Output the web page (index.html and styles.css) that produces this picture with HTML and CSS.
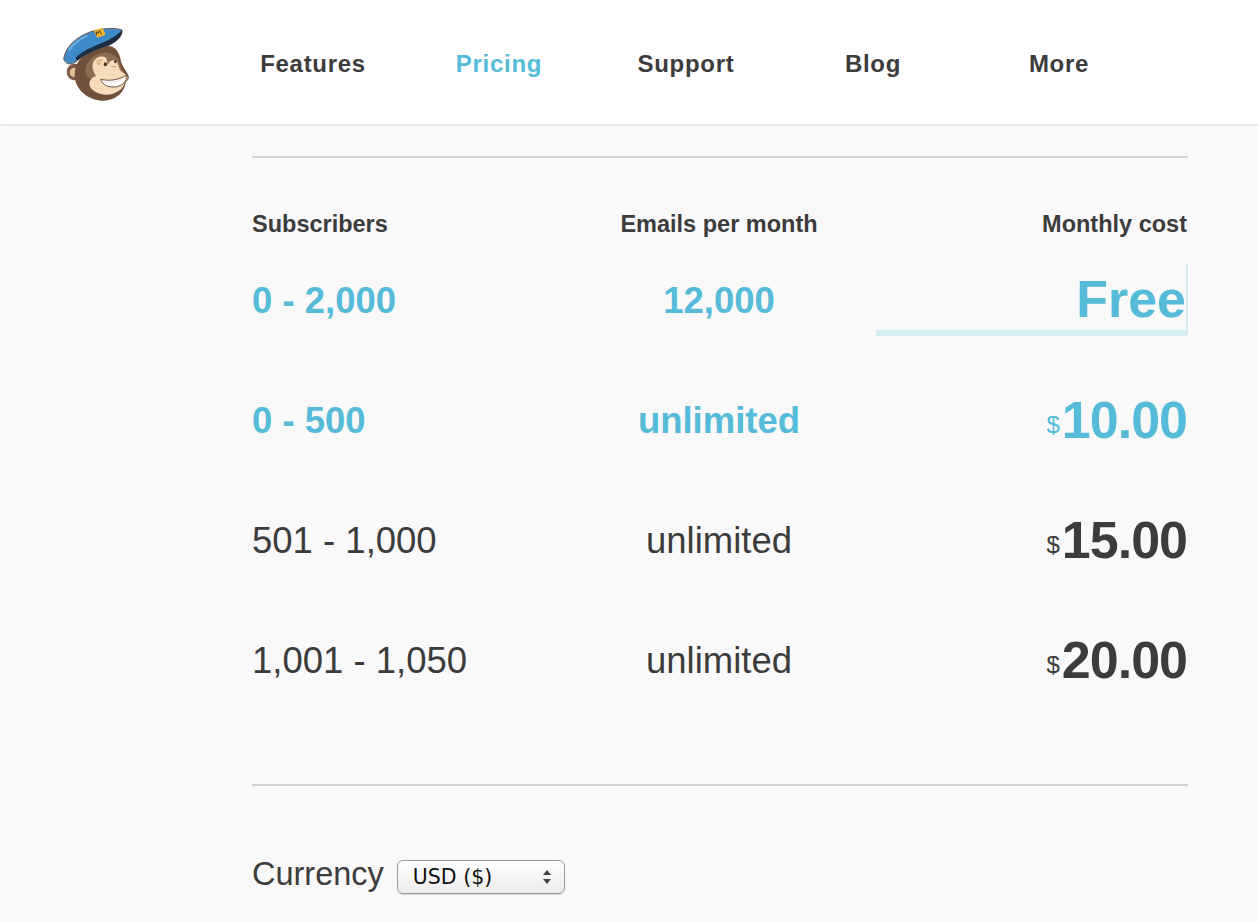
FILE: index.html
```html
<!DOCTYPE html>
<html lang="en">
<head>
<meta charset="utf-8">
<title>Pricing</title>
<link rel="stylesheet" href="styles.css">
</head>
<body>
<header class="top">
  <a class="logo" href="#" aria-label="Logo">
    <svg width="110" height="110" viewBox="0 0 330 330">
      <circle cx="105" cy="186" r="25" fill="#7a5a44"/>
      <circle cx="103" cy="187" r="14" fill="#e2bd95"/>
      <path d="M108 170C120 135 165 112 205 108C232 110 240 135 243 155C248 172 262 185 266 198C268 206 264 212 258 216C252 250 225 272 190 272C150 272 115 245 106 212C103 195 104 182 108 170z" fill="#70503a"/>
      <path d="M136 186C134 160 160 130 190 128C206 126 222 132 234 146C240 165 246 180 256 194L200 214L160 210C146 206 138 198 136 186z" fill="#8e6c51"/>
      <path d="M160 156C168 140 186 136 196 142C202 148 202 156 202 166C208 154 216 148 226 152C234 156 236 170 240 180C246 188 258 192 262 200C264 208 258 214 254 216C252 238 226 254 200 254C172 254 150 240 148 222C148 210 156 202 168 198C160 184 154 170 160 156z" fill="#f6dcb8"/>
      <path d="M168 152C176 146 186 146 190 150C184 154 182 164 178 168C172 164 166 158 168 152z" fill="#e3bd94"/>
      <path d="M72 142C78 108 112 80 150 66C185 54 225 52 246 60C248 75 235 92 210 104C175 118 140 128 112 152C100 162 85 166 78 157C72 152 70 147 72 142z" fill="#3f8ac9" stroke="#6f5a4e" stroke-width="3"/>
      <path d="M86 122C98 102 118 88 142 76" fill="none" stroke="#6db0e0" stroke-width="6"/>
      <path d="M246 60C248 75 235 92 210 104C175 118 140 128 112 152L106 144C130 118 170 106 200 92C222 82 238 70 246 60z" fill="#1e2f45"/>
      <path d="M162 62l24-9 8 14 2 8-24 8-8-14z" fill="#f0b52f"/>
      <path d="M170 76l-2-11 7 5 3-9 7 12" fill="none" stroke="#54400f" stroke-width="3"/>
      <ellipse cx="196" cy="163" rx="5" ry="6" fill="#4a3527"/>
      <ellipse cx="226" cy="155" rx="3.5" ry="5" fill="#4a3527"/>
      <path d="M214 168c4 3 10 3 14 1" fill="none" stroke="#b98e66" stroke-width="3"/>
      <path d="M182 208C208 214 236 210 258 196C262 212 250 226 230 230C208 234 188 226 182 208z" fill="#fff" stroke="#70503a" stroke-width="3"/>
      <path d="M192 216C212 219 236 214 252 204" fill="none" stroke="#d9c9b4" stroke-width="2"/>
    </svg>
  </a>
  <nav class="nav">
    <a href="#">Features</a>
    <a href="#" class="active">Pricing</a>
    <a href="#">Support</a>
    <a href="#">Blog</a>
    <a href="#">More</a>
  </nav>
</header>
<main class="content">
  <hr class="rule rule-top">
  <div class="row heads">
    <div>Subscribers</div>
    <div class="mid">Emails per month</div>
    <div class="end">Monthly cost</div>
  </div>
  <div class="row data hl first">
    <div class="lab">0 - 2,000</div>
    <div class="lab mid">12,000</div>
    <div class="end"><span class="free">Free</span></div>
  </div>
  <div class="row data hl">
    <div class="lab">0 - 500</div>
    <div class="lab mid">unlimited</div>
    <div class="end"><span class="cur">$</span><span class="amt">10.00</span></div>
  </div>
  <div class="row data">
    <div class="lab">501 - 1,000</div>
    <div class="lab mid">unlimited</div>
    <div class="end"><span class="cur">$</span><span class="amt">15.00</span></div>
  </div>
  <div class="row data">
    <div class="lab">1,001 - 1,050</div>
    <div class="lab mid">unlimited</div>
    <div class="end"><span class="cur">$</span><span class="amt">20.00</span></div>
  </div>
  <hr class="rule rule-bottom">
  <div class="currency">
    <span class="cur-label">Currency</span>
    <div class="select"><span>USD ($)</span>
      <svg width="10" height="14" viewBox="0 0 10 14"><path d="M5 0l4 5H1zM5 14L1 9h8z" fill="#444"/></svg>
    </div>
  </div>
</main>
</body>
</html>
```
FILE: styles.css
```css
* { box-sizing: border-box; }
html, body { margin: 0; height: 100%; }
body {
  background: #f9f9f9;
  color: #3c3c3c;
  font-family: "Liberation Sans", Arial, sans-serif;
  overflow: hidden;
}
.top {
  height: 125px;
  background: #fff;
  border-bottom: 1px solid #e6e6e6;
  box-shadow: 0 1px 2px rgba(0,0,0,.04);
  display: flex;
  align-items: flex-start;
}
.logo { display: block; margin: 10px 0 0 40px; width: 110px; height: 110px; }
.nav {
  margin-left: 70px;
  display: grid;
  grid-template-columns: 186px 186px 188px 186px 186px;
  height: 128px;
  align-items: center;
  text-align: center;
}
.nav a {
  color: #3c3c3c;
  text-decoration: none;
  font-weight: 700;
  font-size: 24px;
  letter-spacing: .7px;
}
.nav a.active { color: #55bbd8; }
.content { width: 936px; margin-left: 252px; }
.rule { border: 0; height: 2px; background: #d2d2d2; margin: 0; }
.rule-top { margin-top: 31px; }
.row {
  display: grid;
  grid-template-columns: 1fr 1fr 1fr;
  align-items: center;
}
.mid { text-align: center; padding-right: 2px; }
.end { text-align: right; padding-right: 1px; }
.heads {
  margin-top: 51px;
  height: 30px;
  font-size: 23.5px;
  font-weight: 700;
}
.data { height: 120px; font-size: 36.5px; }
.first { margin-top: 1px; }
.lab { padding-top: 2px; }
.hl { color: #55bbd8; font-weight: 700; }
.cur { font-size: 24px; font-weight: 400; margin-right: 2px; vertical-align: 5px; }
.amt {
  font-size: 52px;
  font-weight: 700;
  letter-spacing: -1px;
}
.free {
  display: block;
  font-size: 52px;
  font-weight: 700;
  margin-right: -1px;
  padding-top: 4px;
  line-height: 62px;
  border-right: 2px solid #d5ecf3;
  border-bottom: 6px solid #d5ecf3;
}
.rule-bottom { margin-top: 64px; }
.currency {
  display: flex;
  align-items: center;
  margin-top: 68px;
  gap: 13px;
}
.cur-label { font-size: 32.5px; }
.select {
  width: 168px;
  height: 34px;
  margin-top: 6px;
  border: 1px solid #9b9b9b;
  border-radius: 6px;
  background: linear-gradient(#fff, #ebebeb);
  box-shadow: 0 1px 1px rgba(0,0,0,.15);
  display: flex;
  align-items: center;
  justify-content: space-between;
  padding: 0 12px 0 15px;
  font-family: "DejaVu Sans", sans-serif;
  font-size: 20.5px;
  color: #111;
}
```
